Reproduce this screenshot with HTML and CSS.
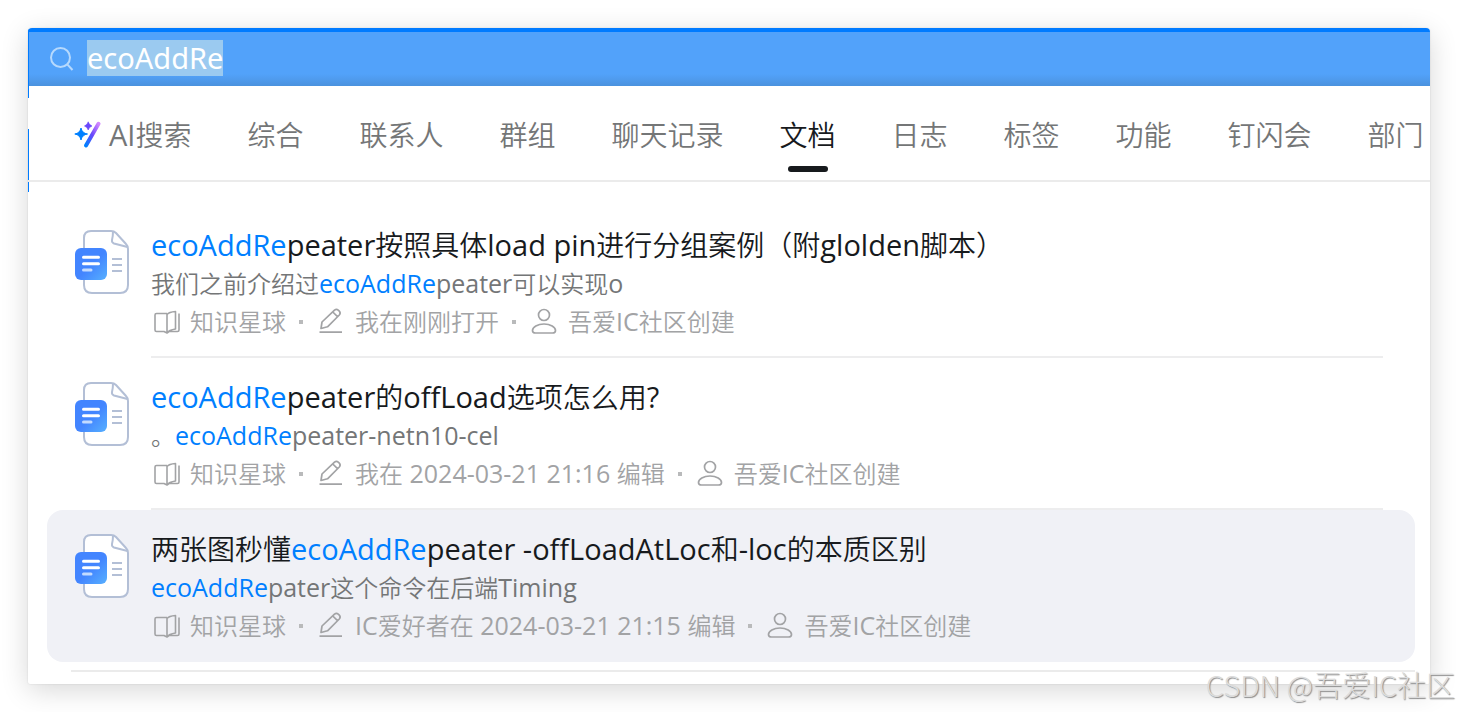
FILE: index.html
```html
<!DOCTYPE html>
<html lang="zh-CN">
<head>
<meta charset="utf-8">
<meta name="viewport" content="width=device-width, initial-scale=1">
<title>ecoAddRe</title>
<link rel="stylesheet" href="styles.css">
</head>
<body>
<svg class="sprite" aria-hidden="true">
  <defs>
    <linearGradient id="badge" x1="0.2" y1="0.2" x2="1" y2="1">
      <stop offset="0.4" stop-color="#4385ff"/><stop offset="1" stop-color="#57b0ff"/>
    </linearGradient>
    <linearGradient id="wand" x1="1" y1="0" x2="0" y2="1">
      <stop offset="0" stop-color="#d287ff"/><stop offset="0.5" stop-color="#6a48fb"/><stop offset="1" stop-color="#0080ff"/>
    </linearGradient>
  </defs>
  <symbol id="doc" viewBox="0 0 54 64">
    <path d="M16 1H36Q39 1 41 3L51 14Q53 16 53 19V55Q53 63 45 63H17Q9 63 9 55V8Q9 1 16 1Z" fill="#fff" stroke="#b3bfd6" stroke-width="2" stroke-linejoin="round"/>
    <path d="M38 1.500Q38 6 37 10Q36.500 12.500 39 13.500L52.500 17" fill="none" stroke="#b3bfd6" stroke-width="2"/>
    <path d="M37 29H47M37 35H47M37 41H47" stroke="#b3bfd6" stroke-width="2"/>
    <rect y="18" width="32" height="32" rx="6" fill="url(#badge)"/>
    <path d="M8.500 27.300H23.500M8.500 33.700H23.500" stroke="#fff" stroke-width="3" stroke-linecap="round"/>
    <path d="M8.500 40H16" stroke="#c3dbff" stroke-width="3" stroke-linecap="round"/>
  </symbol>
  <symbol id="book" viewBox="0 0 32 32">
    <path d="M16 7.500H5.500Q4 7.500 4 9V24Q4 25.500 5.500 25.500H13L16 27L18 25.500H26.500Q28 25.500 28 24V7.500M16 7.500V27M16 8.500Q18 6 24.500 5.500V23Q18 24 16 27" fill="none" stroke="currentColor" stroke-width="1.600" stroke-linejoin="round"/>
  </symbol>
  <symbol id="pencil" viewBox="0 0 32 32">
    <path d="M5 22.500L6 16L18.500 4.200Q20.500 2.600 22.200 4.200L23.300 5.200Q25 7 23.300 9L11.500 20.800L5 22.500ZM16.800 6L21.500 10.700M3.500 26.200H26" fill="none" stroke="currentColor" stroke-width="1.700" stroke-linejoin="round"/>
  </symbol>
  <symbol id="person" viewBox="0 0 32 32">
    <circle cx="15" cy="9" r="5.500" fill="none" stroke="currentColor" stroke-width="1.700"/>
    <path d="M15 18C8.500 18 3.500 21.300 3.500 24.500C3.500 26.200 4.500 27 6.500 27H23.500C25.500 27 26.500 26.200 26.500 24.500C26.500 21.300 21.500 18 15 18Z" fill="none" stroke="currentColor" stroke-width="1.700"/>
  </symbol>
</svg>

<main class="panel">
  <header class="search">
    <svg class="search-icon" viewBox="0 0 24 24" aria-hidden="true"><circle cx="10.500" cy="10.500" r="9.500"/><path d="M17.300 17.300L22.500 23"/></svg>
    <input class="search-input" type="text" value="ecoAddRe" size="9" aria-label="搜索">
  </header>

  <nav class="tabs" aria-label="搜索分类">
    <button class="tab tab-ai" type="button">
      <svg class="ai-icon" viewBox="0 0 28 28" aria-hidden="true">
        <path d="M24.500 2.800L12 24.500" stroke="url(#wand)" stroke-width="4" stroke-linecap="round"/>
        <path d="M7 7Q8.200 12.300 13.500 13Q8.200 13.700 7 19Q5.800 13.700 0.800 13Q5.800 12.300 7 7Z" fill="#0080ff" stroke="#0080ff"/>
        <path d="M14.200 0.800Q15 4 18 5Q15 6 14.200 9Q13.400 6 10.500 5Q13.400 4 14.200 0.800Z" fill="#6a48fb" stroke="#6a48fb" stroke-width="0.600"/>
      </svg>
      <span><span class="latin">AI</span>搜索</span>
    </button>
    <button class="tab" type="button">综合</button>
    <button class="tab" type="button">联系人</button>
    <button class="tab" type="button">群组</button>
    <button class="tab" type="button">聊天记录</button>
    <button class="tab active" type="button" aria-current="true">文档</button>
    <button class="tab" type="button">日志</button>
    <button class="tab" type="button">标签</button>
    <button class="tab" type="button">功能</button>
    <button class="tab" type="button">钉闪会</button>
    <button class="tab" type="button">部门</button>
  </nav>

  <section class="results">
    <article class="result">
      <svg class="doc-icon" aria-hidden="true"><use href="#doc"/></svg>
      <div class="result-body">
        <h2 class="title"><span class="latin"><mark>ecoAddRe</mark>peater</span>按照具体<span class="latin">load pin</span>进行分组案例（附<span class="latin">glolden</span>脚本）</h2>
        <p class="snippet">我们之前介绍过<span class="latin"><mark>ecoAddRe</mark>peater</span>可以实现<span class="latin">o</span></p>
        <div class="meta">
          <span class="meta-item"><svg class="meta-icon" aria-hidden="true"><use href="#book"/></svg><span>知识星球</span></span>
          <span class="meta-item"><svg class="meta-icon" aria-hidden="true"><use href="#pencil"/></svg><span>我在刚刚打开</span></span>
          <span class="meta-item"><svg class="meta-icon" aria-hidden="true"><use href="#person"/></svg><span>吾爱<span class="latin">IC</span>社区创建</span></span>
        </div>
      </div>
    </article>
    <article class="result">
      <svg class="doc-icon" aria-hidden="true"><use href="#doc"/></svg>
      <div class="result-body">
        <h2 class="title"><span class="latin"><mark>ecoAddRe</mark>peater</span>的<span class="latin">offLoad</span>选项怎么用<span class="latin">?</span></h2>
        <p class="snippet">。<span class="latin"><mark>ecoAddRe</mark>peater-netn10-cel</span></p>
        <div class="meta">
          <span class="meta-item"><svg class="meta-icon" aria-hidden="true"><use href="#book"/></svg><span>知识星球</span></span>
          <span class="meta-item"><svg class="meta-icon" aria-hidden="true"><use href="#pencil"/></svg><span>我在<span class="latin"> 2024-03-21 21:16 </span>编辑</span></span>
          <span class="meta-item"><svg class="meta-icon" aria-hidden="true"><use href="#person"/></svg><span>吾爱<span class="latin">IC</span>社区创建</span></span>
        </div>
      </div>
    </article>
    <article class="result selected">
      <svg class="doc-icon" aria-hidden="true"><use href="#doc"/></svg>
      <div class="result-body">
        <h2 class="title">两张图秒懂<span class="latin"><mark>ecoAddRe</mark>peater -offLoadAtLoc</span>和<span class="latin">-loc</span>的本质区别</h2>
        <p class="snippet"><span class="latin"><mark>ecoAddRe</mark>pater</span>这个命令在后端<span class="latin">Timing</span></p>
        <div class="meta">
          <span class="meta-item"><svg class="meta-icon" aria-hidden="true"><use href="#book"/></svg><span>知识星球</span></span>
          <span class="meta-item"><svg class="meta-icon" aria-hidden="true"><use href="#pencil"/></svg><span><span class="latin">IC</span>爱好者在<span class="latin"> 2024-03-21 21:15 </span>编辑</span></span>
          <span class="meta-item"><svg class="meta-icon" aria-hidden="true"><use href="#person"/></svg><span>吾爱<span class="latin">IC</span>社区创建</span></span>
        </div>
      </div>
    </article>
  </section>
</main>
<div class="watermark">CSDN @吾爱IC社区</div>
</body>
</html>
```

FILE: styles.css
```css
* {
  box-sizing: border-box;
}

body {
  position: relative;
  margin: 0;
  padding: 28px;
  background: #fff;
  color: #171a1d;
  font-family: "Open Sans", "Noto Sans CJK SC", sans-serif;
  font-weight: 350;
}

.sprite {
  position: absolute;
  width: 0;
  height: 0;
}

.latin {
  font-weight: 400;
  line-height: 1;
}

.panel {
  overflow: hidden;
  padding-bottom: 12px;
  border-radius: 4px 4px 2px 2px;
  background:
    linear-gradient(#007bff, #007bff) 0 58px / 1px 12px no-repeat,
    linear-gradient(#007bff, #007bff) 0 101px / 1px 63px no-repeat,
    #fff;
  box-shadow: 0 6px 28px rgba(0, 0, 0, 0.16), 0 0 2px rgba(0, 0, 0, 0.12);
}

/* Search bar */

.search {
  display: flex;
  align-items: center;
  gap: 13px;
  height: 58px;
  padding: 0 0 2px 21px;
  border-top: 4px solid #007bff;
  border-left: 1px solid #007bff;
  background: linear-gradient(#52a2fa, #52a2fa 42px, #4b92de);
}

.search-icon {
  width: 24px;
  height: 24px;
  margin-top: 2px;
  fill: none;
  stroke: #b6d9fd;
  stroke-width: 2;
}

.search-input {
  field-sizing: content;
  height: 36px;
  padding: 0;
  border: 0;
  outline: 0;
  background: #9bcaf0;
  color: #fff;
  font: 400 29px/36px "Noto Sans", sans-serif;
}

/* Category tabs */

.tabs {
  display: flex;
  gap: 56px;
  overflow: hidden;
  height: 96px;
  padding: 4px 8px 0 46px;
  border-bottom: 2px solid #ebebeb;
}

.tab {
  position: relative;
  flex: none;
  padding: 0;
  border: 0;
  background: none;
  color: #747677;
  font: inherit;
  font-size: 28px;
  line-height: 40px;
}

.tab .latin,
.title .latin {
  font-size: 29px;
}

.tab-ai {
  display: flex;
  align-items: center;
  gap: 7px;
}

.ai-icon {
  width: 28px;
  height: 28px;
  fill: none;
}

.tab.active {
  color: #171a1d;
}

.tab.active::after {
  content: "";
  position: absolute;
  bottom: 8px;
  left: 8px;
  right: 8px;
  height: 6px;
  border-radius: 3px;
  background: #171a1d;
}

/* Result list */

.results {
  position: relative;
  padding: 24px 15px 10px 19px;
}

.results::after {
  content: "";
  position: absolute;
  left: 43px;
  right: 15px;
  bottom: 0;
  height: 2px;
  background: #ebebeb;
}

.result {
  display: flex;
  gap: 22px;
  padding: 0 32px 0 28px;
}

.result.selected {
  border-radius: 16px;
  background: #f0f1f6;
}

.doc-icon {
  flex: none;
  width: 54px;
  height: 64px;
  margin-top: 24px;
}

.result-body {
  flex: 1;
  min-width: 0;
  padding: 19px 0 15px;
  border-bottom: 2px solid #ededee;
}

.selected .result-body {
  border-color: transparent;
}

.title {
  margin: 0;
  font-size: 28px;
  font-weight: inherit;
  line-height: 40px;
}

.snippet {
  margin: 0;
  color: #747677;
  font-size: 24px;
  line-height: 38px;
}

.snippet .latin,
.meta .latin {
  font-size: 25px;
}

mark {
  background: none;
  color: #007fff;
}

.meta {
  display: flex;
  color: #a2a3a5;
  font-size: 24px;
  line-height: 38px;
}

.meta-item {
  display: flex;
  align-items: center;
  gap: 7px;
}

.meta-item + .meta-item::before {
  content: "";
  width: 4px;
  height: 4px;
  margin: 0 6px 0 13px;
  background: #b9babb;
}

.meta-icon {
  width: 32px;
  height: 32px;
}

.watermark {
  position: absolute;
  right: 3px;
  bottom: 8px;
  color: #dcdcdc;
  font-family: "Noto Sans CJK SC", sans-serif;
  font-size: 29px;
  font-weight: 300;
  line-height: 40px;
  text-shadow: 1px 1px 1px #8c8c8c;
}
```
